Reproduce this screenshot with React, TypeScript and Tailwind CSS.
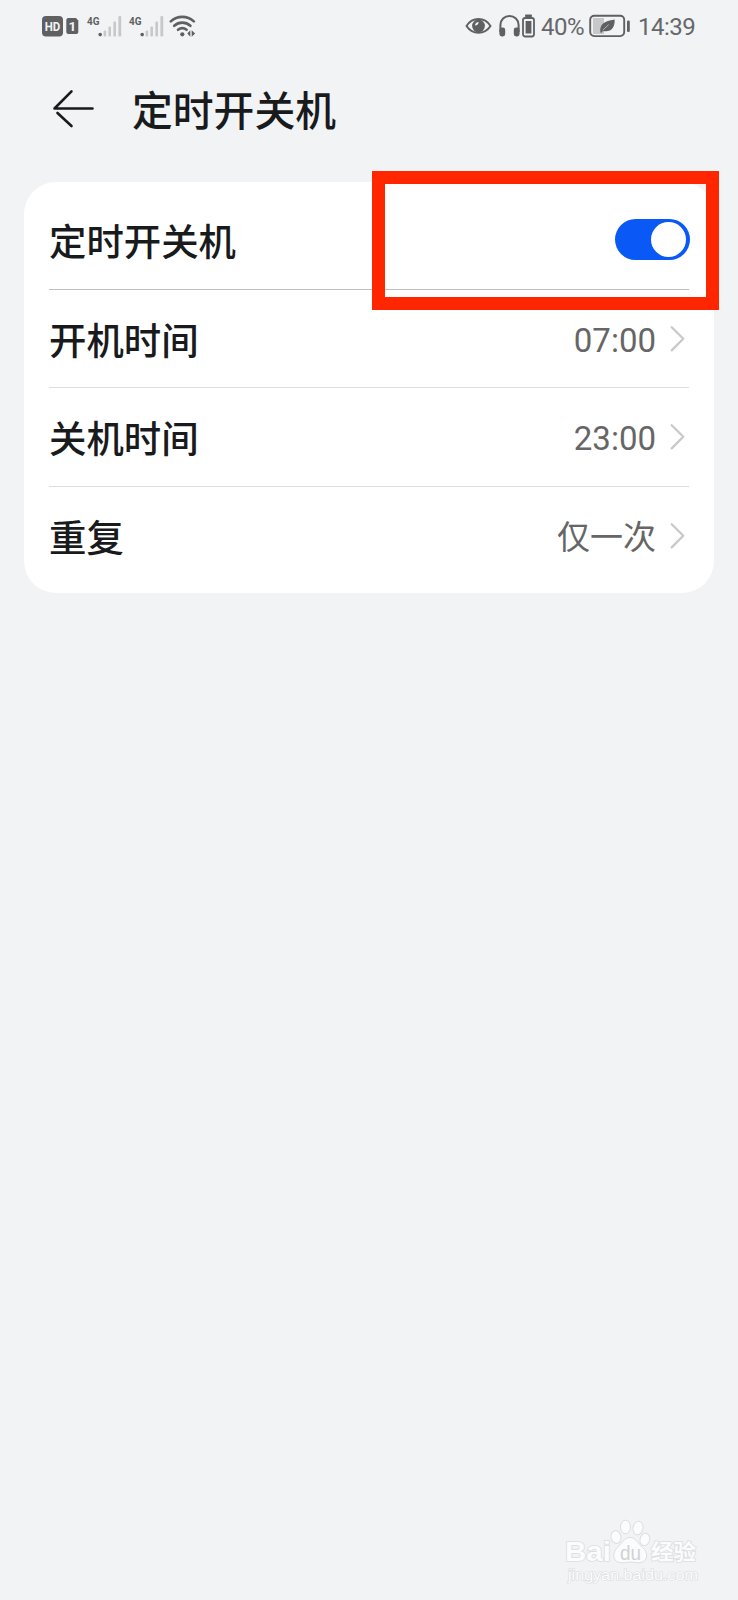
import type { ReactNode } from 'react';

interface SettingRowProps {
  label: string;
  value?: string;
  className: string;
  children?: ReactNode;
}

function SignalIcon() {
  return (
    <svg width="36" height="24" viewBox="0 0 36 24" className="overflow-visible" aria-hidden="true">
      <text x="0" y="11" fontSize="11.8" fontWeight="700" fill="#5f6062" textLength="12.5" lengthAdjust="spacingAndGlyphs">
        4G
      </text>
      <circle cx="13.2" cy="20.6" r="1.8" fill="#5f6062" />
      <g fill="#c6c8ca">
        <rect x="16.6" y="16.5" width="2.6" height="6" rx="1" />
        <rect x="21.4" y="12.5" width="2.6" height="10" rx="1" />
        <rect x="26.4" y="7.5" width="2.6" height="15" rx="1" />
        <rect x="31.4" y="2" width="2.8" height="20.5" rx="1" />
      </g>
    </svg>
  );
}

function WifiIcon() {
  return (
    <svg width="28" height="24" viewBox="0 0 28 24" fill="none" stroke="#5f6062" strokeWidth="2.6" aria-hidden="true">
      <path d="M1.8 7.4C8.3 1.4 18.3 1.4 24.8 7.4" strokeLinecap="round" />
      <path d="M5.2 11.8c4.7-4.2 11.5-4.2 16.2 0" strokeLinecap="round" />
      <path d="M9 15.8c2.6-2.1 6-2.1 8.6 0" strokeLinecap="round" />
      <circle cx="13.3" cy="20.3" r="2.1" fill="#5f6062" stroke="none" />
      <path d="M21.3 16.3v6.4l-3-3.2zM22.7 16.3v6.4l3.4-3.2z" fill="#5f6062" stroke="none" />
    </svg>
  );
}

function StatusBar() {
  return (
    <div className="flex h-[52px] items-center justify-between px-[42px] text-[#66676a]">
      <div className="flex items-center">
        <svg width="37" height="24" viewBox="0 0 37 24" fill="#5f6062" aria-hidden="true">
          <rect x="0" y="2" width="21" height="20.5" rx="4" />
          <path d="M26.5 4h7.5l2.3 2.5v11.5a2 2 0 0 1-2 2h-8a2 2 0 0 1-2-2V6a2 2 0 0 1 2-2z" />
          <text x="2.7" y="17" fontSize="13" fontWeight="700" fill="#f1f3f5" textLength="15.6" lengthAdjust="spacingAndGlyphs">
            HD
          </text>
          <text x="26.5" y="17" fontSize="13.5" fontWeight="700" fill="#f1f3f5">
            1
          </text>
        </svg>
        <div className="ml-2 flex gap-[6px]">
          <SignalIcon />
          <SignalIcon />
        </div>
        <div className="ml-1">
          <WifiIcon />
        </div>
      </div>

      <div className="flex items-center">
        <svg width="27" height="24" viewBox="0 0 27 24" aria-hidden="true">
          <path d="M1.5 12C7.5 2.8 19.5 2.8 25.5 12 19.5 21 7.5 21 1.5 12z" fill="none" stroke="#5f6062" strokeWidth="2" strokeLinejoin="round" />
          <circle cx="13.5" cy="12" r="6.4" fill="#5f6062" />
          <path d="M13.6 8c-.2 2.2-1.2 3.3-3.6 3.5.1-2 1.5-3.4 3.6-3.5z" fill="#f1f3f5" />
        </svg>
        <svg className="ml-[7px]" width="21" height="24" viewBox="0 0 21 24" aria-hidden="true">
          <path d="M1.4 18v-7a9.1 9.1 0 0 1 18.2 0v7" fill="none" stroke="#5f6062" strokeWidth="2" />
          <rect x=".4" y="13.5" width="5.8" height="9" rx="2.4" fill="#5f6062" />
          <rect x="14.8" y="13.5" width="5.8" height="9" rx="2.4" fill="#5f6062" />
        </svg>
        <svg className="ml-[2px]" width="13" height="24" viewBox="0 0 13 24" fill="#5f6062" aria-hidden="true">
          <rect x="3" y=".5" width="7" height="2.5" rx=".8" />
          <rect x="1" y="4" width="11" height="18.5" rx="2.2" fill="none" stroke="#5f6062" strokeWidth="1.8" />
          <rect x="3.6" y="7" width="5.8" height="12.5" />
        </svg>
        <span className="ml-[6px] w-[44px] pt-px text-[24px] tracking-[-0.5px] whitespace-nowrap">40%</span>
        <svg className="ml-[4px]" width="42" height="24" viewBox="0 0 42 24" aria-hidden="true">
          <rect x="4" y="4" width="11" height="16" fill="#c6c8ca" />
          <rect x="1.2" y="1.7" width="34" height="20.4" rx="4" fill="none" stroke="#5f6062" strokeWidth="1.9" />
          <rect x="38" y="6.5" width="2.8" height="11.5" rx="1.2" fill="#5f6062" />
          <path d="M11.4 18.6c-1.2-8 3.6-11.6 14.2-13.1.6 8.2-3.8 13.2-11.7 11.4l-1.4 1.9z" fill="#5f6062" />
          <path d="M13.7 16.2l6-5.6" stroke="#c6c8ca" strokeWidth=".8" />
        </svg>
        <span className="ml-[7px] w-[58px] pt-px text-[24px] tracking-[-0.5px] whitespace-nowrap">14:39</span>
      </div>
    </div>
  );
}

function SettingRow({ label, value, className, children }: SettingRowProps) {
  return (
    <div className={`flex items-center justify-between ${className}`}>
      <span className="pt-2 text-[37.4px] leading-none font-medium text-[#191a1c]">{label}</span>
      {children}
      {value && (
        <div className="flex items-center gap-[14px] pr-[4px]">
          <span className="pt-[3px] text-[33px] leading-none text-[#666]">{value}</span>
          <svg width="15" height="28" viewBox="0 0 15 28" fill="none" aria-hidden="true">
            <path d="M1.7 2.2L13.3 13.7 1.7 25.4" stroke="#c9c9c9" strokeWidth="2.3" strokeLinecap="round" strokeLinejoin="round" />
          </svg>
        </div>
      )}
    </div>
  );
}

function Watermark() {
  return (
    <svg
      className="absolute top-[1515px] left-[562px] font-['Liberation_Sans','Noto_Sans_CJK_SC',sans-serif]"
      width="145"
      height="72"
      viewBox="0 0 145 72"
      fill="#fbfcfc"
      stroke="#dcdee0"
      strokeWidth="1"
    >
      <text x="3" y="45.5" fontSize="28" fontWeight="700" strokeWidth="1.6" paintOrder="stroke" textLength="46" lengthAdjust="spacingAndGlyphs">
        Bai
      </text>
      <ellipse cx="54" cy="22" rx="5" ry="6.5" transform="rotate(-12 54 22)" />
      <ellipse cx="63.5" cy="12" rx="5" ry="6.8" />
      <ellipse cx="76" cy="13" rx="5" ry="6.8" transform="rotate(10 76 13)" />
      <ellipse cx="83" cy="24.5" rx="4.8" ry="6.3" transform="rotate(15 83 24)" />
      <path d="M68 22.5c-6 0-8 6-12.500 10-5.500 5-5 14 2 15 5 .8 7-.5 10.500-.5s6 1.300 11 .5c7-1.500 7.500-10.500 1.500-15-4.500-4-6.500-10-12.500-10z" />
      <text x="58" y="44.5" fontSize="20" fill="#d0d2d5" stroke="none" textLength="21" lengthAdjust="spacingAndGlyphs">
        du
      </text>
      <text x="89" y="44" fontSize="21" fontWeight="700" strokeWidth="1.6" paintOrder="stroke" textLength="45" lengthAdjust="spacingAndGlyphs">
        经验
      </text>
      <text x="6" y="64.500" fontSize="14" strokeWidth="1.2" paintOrder="stroke" textLength="130" lengthAdjust="spacingAndGlyphs">
        jingyan.baidu.com
      </text>
    </svg>
  );
}

export default function App() {
  return (
    <div className="relative h-[1600px] w-[738px] overflow-hidden bg-[#f1f3f5] font-[Roboto,'Noto_Sans_CJK_SC',sans-serif]">
      <StatusBar />

      <header className="flex h-[130px] items-start pt-[37px] pl-[52px]">
        <svg width="42" height="40" viewBox="0 0 42 40" fill="none" stroke="#191a1c" strokeWidth="2.6" strokeLinecap="round" strokeLinejoin="round" aria-hidden="true">
          <path d="M40.5 19.5H2.5L19.5 2.3M5.5 24L19.5 37" />
        </svg>
        <h1 className="ml-[38px] pt-px text-[40.8px] leading-[44px] font-medium text-[#191a1c]">定时开关机</h1>
      </header>

      <main className="mx-6 rounded-[32px] bg-white px-[25px] pt-2 pb-[9px]">
        <SettingRow label="定时开关机" className="h-[100px] border-b border-[#bfbfbf]">
          <button
            type="button"
            role="switch"
            aria-checked="true"
            aria-label="定时开关机"
            className="-mr-px flex h-[41px] w-[75px] items-center justify-end rounded-full bg-[#0a59f7] pr-1"
          >
            <span className="h-[35px] w-[35px] rounded-full bg-white" />
          </button>
        </SettingRow>
        <SettingRow label="开机时间" value="07:00" className="h-[98px] border-b border-[#dedede]" />
        <SettingRow label="关机时间" value="23:00" className="h-[99px] border-b border-[#dedede]" />
        <SettingRow label="重复" value="仅一次" className="h-[97px]" />
      </main>

      <div className="absolute top-[171px] left-[372px] h-[139px] w-[347px] border-[13px] border-[#ff2600]" />
      <Watermark />
    </div>
  );
}
